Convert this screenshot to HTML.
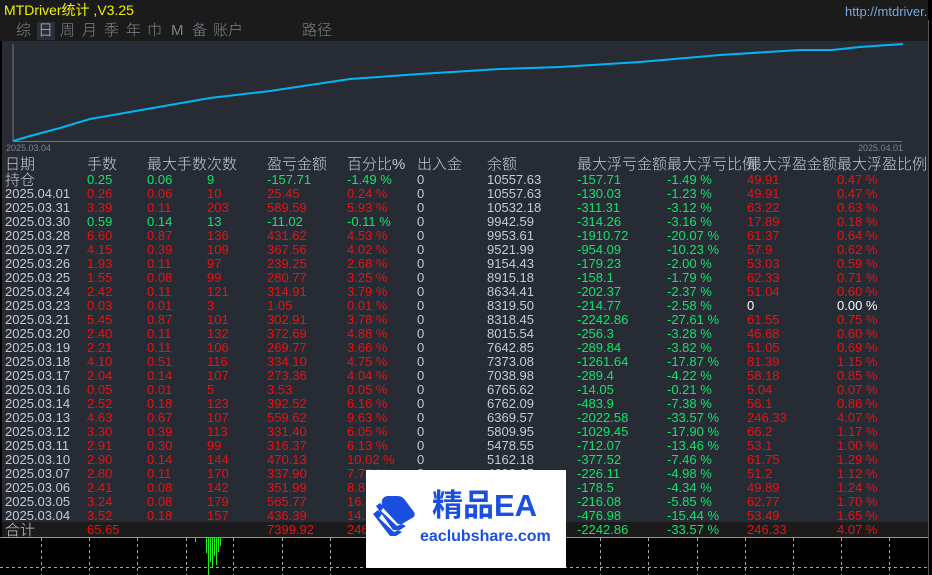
<!DOCTYPE html>
<html><head><meta charset="utf-8"><style>
*{margin:0;padding:0;box-sizing:border-box}
body{width:932px;height:575px;background:#000;position:relative;overflow:hidden;font-family:"Liberation Sans","Noto Sans CJK SC",sans-serif;}
.a{position:absolute;white-space:nowrap}
#top{left:0;top:0;width:928px;height:20px;background:#1b1b1b}
#tabs{left:0;top:20px;width:928px;height:21px;background:#1b1b1b}
#main{left:2px;top:41px;width:926px;height:497px;background:#262b34}
.t{color:#7d8590;font-size:15px;top:21px;line-height:20px;font-weight:300}
.r{position:absolute;left:0;width:928px;height:14px;font-size:13px;line-height:14px;color:#c3cbd8}
.r span{position:absolute;top:0}
.c0{left:5px}.c1{left:87px}.c2{left:147px}.c3{left:207px}.c4{left:267px}.c5{left:347px}.c6{left:417px}.c7{left:487px}.c8{left:577px}.c9{left:667px}.c10{left:747px}.c11{left:837px}
.g{color:#14e36a}.d{color:#f01010}
.h{font-size:15px;line-height:16px;color:#c3cbd8;font-weight:300}
</style></head><body>
<div class="a" id="top"></div>
<div class="a" style="left:4px;top:2px;font-size:14px;color:#f2f200;line-height:16px">MTDriver统计 ,V3.25</div>
<div class="a" style="left:845px;top:4px;font-size:13px;color:#7aa8e0;line-height:15px">http://mtdriver.</div>
<div class="a" id="tabs"></div>
<div class="a" style="left:37px;top:22px;width:18px;height:18px;background:#2a2f38"></div>
<div class="a t" style="left:16px">综</div>
<div class="a t" style="left:38px;color:#b8c0cc">日</div>
<div class="a t" style="left:60px">周</div>
<div class="a t" style="left:82px">月</div>
<div class="a t" style="left:104px">季</div>
<div class="a t" style="left:126px">年</div>
<div class="a t" style="left:147px">巾</div>
<div class="a t" style="left:171px">M</div>
<div class="a t" style="left:192px">备</div>
<div class="a t" style="left:213px">账户</div>
<div class="a t" style="left:302px">路径</div>
<div class="a" id="main"></div>
<div class="a" style="left:928px;top:20px;width:4px;height:555px;background:#000;border-left:1px solid #555"></div>
<svg class="a" style="left:0;top:41px" width="928" height="115">
<line x1="13" y1="3" x2="13" y2="100" stroke="#777" stroke-width="1"/>
<line x1="13" y1="100.5" x2="902" y2="100.5" stroke="#777" stroke-width="1"/>
<polyline fill="none" stroke="#00b6f5" stroke-width="2" points="13,100 30,95 60,87 90,78 130,71 170,64 210,57 270,50 350,38 420,33 500,28 560,26 640,21 720,14 800,9 832,9 860,6 903,3"/>
<text x="6" y="110" font-size="9" fill="#7d8590" font-family="Liberation Sans">2025.03.04</text>
<text x="858" y="110" font-size="9" fill="#7d8590" font-family="Liberation Sans">2025.04.01</text>
</svg>
<div class="r h" style="top:157px"><span class="c0">日期</span><span class="c1">手数</span><span class="c2">最大手数次数</span><span class="c4">盈亏金额</span><span class="c5">百分比%</span><span class="c6">出入金</span><span class="c7">余额</span><span class="c8">最大浮亏金额</span><span class="c9">最大浮亏比例</span><span class="c10">最大浮盈金额</span><span class="c11">最大浮盈比例</span></div>
<div class="r" style="top:173px"><span class="c0 h">持仓</span><span class="c1 g">0.25</span><span class="c2 g">0.06</span><span class="c3 g">9</span><span class="c4 g">-157.71</span><span class="c5 g">-1.49 %</span><span class="c6">0</span><span class="c7">10557.63</span><span class="c8 g">-157.71</span><span class="c9 g">-1.49 %</span><span class="c10 d">49.91</span><span class="c11 d">0.47 %</span></div>
<div class="r" style="top:187px"><span class="c0">2025.04.01</span><span class="c1 d">0.26</span><span class="c2 d">0.06</span><span class="c3 d">10</span><span class="c4 d">25.45</span><span class="c5 d">0.24 %</span><span class="c6">0</span><span class="c7">10557.63</span><span class="c8 g">-130.03</span><span class="c9 g">-1.23 %</span><span class="c10 d">49.91</span><span class="c11 d">0.47 %</span></div>
<div class="r" style="top:201px"><span class="c0">2025.03.31</span><span class="c1 d">3.39</span><span class="c2 d">0.11</span><span class="c3 d">203</span><span class="c4 d">589.59</span><span class="c5 d">5.93 %</span><span class="c6">0</span><span class="c7">10532.18</span><span class="c8 g">-311.31</span><span class="c9 g">-3.12 %</span><span class="c10 d">63.22</span><span class="c11 d">0.63 %</span></div>
<div class="r" style="top:215px"><span class="c0">2025.03.30</span><span class="c1 g">0.59</span><span class="c2 g">0.14</span><span class="c3 g">13</span><span class="c4 g">-11.02</span><span class="c5 g">-0.11 %</span><span class="c6">0</span><span class="c7">9942.59</span><span class="c8 g">-314.26</span><span class="c9 g">-3.16 %</span><span class="c10 d">17.89</span><span class="c11 d">0.18 %</span></div>
<div class="r" style="top:229px"><span class="c0">2025.03.28</span><span class="c1 d">6.60</span><span class="c2 d">0.87</span><span class="c3 d">136</span><span class="c4 d">431.62</span><span class="c5 d">4.53 %</span><span class="c6">0</span><span class="c7">9953.61</span><span class="c8 g">-1910.72</span><span class="c9 g">-20.07 %</span><span class="c10 d">61.37</span><span class="c11 d">0.64 %</span></div>
<div class="r" style="top:243px"><span class="c0">2025.03.27</span><span class="c1 d">4.15</span><span class="c2 d">0.39</span><span class="c3 d">109</span><span class="c4 d">367.56</span><span class="c5 d">4.02 %</span><span class="c6">0</span><span class="c7">9521.99</span><span class="c8 g">-954.09</span><span class="c9 g">-10.23 %</span><span class="c10 d">57.9</span><span class="c11 d">0.62 %</span></div>
<div class="r" style="top:257px"><span class="c0">2025.03.26</span><span class="c1 d">1.93</span><span class="c2 d">0.11</span><span class="c3 d">97</span><span class="c4 d">239.25</span><span class="c5 d">2.68 %</span><span class="c6">0</span><span class="c7">9154.43</span><span class="c8 g">-179.23</span><span class="c9 g">-2.00 %</span><span class="c10 d">53.03</span><span class="c11 d">0.59 %</span></div>
<div class="r" style="top:271px"><span class="c0">2025.03.25</span><span class="c1 d">1.55</span><span class="c2 d">0.08</span><span class="c3 d">99</span><span class="c4 d">280.77</span><span class="c5 d">3.25 %</span><span class="c6">0</span><span class="c7">8915.18</span><span class="c8 g">-158.1</span><span class="c9 g">-1.79 %</span><span class="c10 d">62.33</span><span class="c11 d">0.71 %</span></div>
<div class="r" style="top:285px"><span class="c0">2025.03.24</span><span class="c1 d">2.42</span><span class="c2 d">0.11</span><span class="c3 d">121</span><span class="c4 d">314.91</span><span class="c5 d">3.79 %</span><span class="c6">0</span><span class="c7">8634.41</span><span class="c8 g">-202.37</span><span class="c9 g">-2.37 %</span><span class="c10 d">51.04</span><span class="c11 d">0.60 %</span></div>
<div class="r" style="top:299px"><span class="c0">2025.03.23</span><span class="c1 d">0.03</span><span class="c2 d">0.01</span><span class="c3 d">3</span><span class="c4 d">1.05</span><span class="c5 d">0.01 %</span><span class="c6">0</span><span class="c7">8319.50</span><span class="c8 g">-214.77</span><span class="c9 g">-2.58 %</span><span class="c10" style="color:#fff">0</span><span class="c11" style="color:#fff">0.00 %</span></div>
<div class="r" style="top:313px"><span class="c0">2025.03.21</span><span class="c1 d">5.45</span><span class="c2 d">0.87</span><span class="c3 d">101</span><span class="c4 d">302.91</span><span class="c5 d">3.78 %</span><span class="c6">0</span><span class="c7">8318.45</span><span class="c8 g">-2242.86</span><span class="c9 g">-27.61 %</span><span class="c10 d">61.55</span><span class="c11 d">0.75 %</span></div>
<div class="r" style="top:327px"><span class="c0">2025.03.20</span><span class="c1 d">2.40</span><span class="c2 d">0.11</span><span class="c3 d">132</span><span class="c4 d">372.69</span><span class="c5 d">4.88 %</span><span class="c6">0</span><span class="c7">8015.54</span><span class="c8 g">-256.3</span><span class="c9 g">-3.28 %</span><span class="c10 d">46.68</span><span class="c11 d">0.60 %</span></div>
<div class="r" style="top:341px"><span class="c0">2025.03.19</span><span class="c1 d">2.21</span><span class="c2 d">0.11</span><span class="c3 d">106</span><span class="c4 d">269.77</span><span class="c5 d">3.66 %</span><span class="c6">0</span><span class="c7">7642.85</span><span class="c8 g">-289.84</span><span class="c9 g">-3.82 %</span><span class="c10 d">51.05</span><span class="c11 d">0.69 %</span></div>
<div class="r" style="top:355px"><span class="c0">2025.03.18</span><span class="c1 d">4.10</span><span class="c2 d">0.51</span><span class="c3 d">116</span><span class="c4 d">334.10</span><span class="c5 d">4.75 %</span><span class="c6">0</span><span class="c7">7373.08</span><span class="c8 g">-1261.64</span><span class="c9 g">-17.87 %</span><span class="c10 d">81.39</span><span class="c11 d">1.15 %</span></div>
<div class="r" style="top:369px"><span class="c0">2025.03.17</span><span class="c1 d">2.04</span><span class="c2 d">0.14</span><span class="c3 d">107</span><span class="c4 d">273.36</span><span class="c5 d">4.04 %</span><span class="c6">0</span><span class="c7">7038.98</span><span class="c8 g">-289.4</span><span class="c9 g">-4.22 %</span><span class="c10 d">58.18</span><span class="c11 d">0.85 %</span></div>
<div class="r" style="top:383px"><span class="c0">2025.03.16</span><span class="c1 d">0.05</span><span class="c2 d">0.01</span><span class="c3 d">5</span><span class="c4 d">3.53</span><span class="c5 d">0.05 %</span><span class="c6">0</span><span class="c7">6765.62</span><span class="c8 g">-14.05</span><span class="c9 g">-0.21 %</span><span class="c10 d">5.04</span><span class="c11 d">0.07 %</span></div>
<div class="r" style="top:397px"><span class="c0">2025.03.14</span><span class="c1 d">2.52</span><span class="c2 d">0.18</span><span class="c3 d">123</span><span class="c4 d">392.52</span><span class="c5 d">6.16 %</span><span class="c6">0</span><span class="c7">6762.09</span><span class="c8 g">-483.9</span><span class="c9 g">-7.38 %</span><span class="c10 d">56.1</span><span class="c11 d">0.86 %</span></div>
<div class="r" style="top:411px"><span class="c0">2025.03.13</span><span class="c1 d">4.63</span><span class="c2 d">0.67</span><span class="c3 d">107</span><span class="c4 d">559.62</span><span class="c5 d">9.63 %</span><span class="c6">0</span><span class="c7">6369.57</span><span class="c8 g">-2022.58</span><span class="c9 g">-33.57 %</span><span class="c10 d">246.33</span><span class="c11 d">4.07 %</span></div>
<div class="r" style="top:425px"><span class="c0">2025.03.12</span><span class="c1 d">3.30</span><span class="c2 d">0.39</span><span class="c3 d">113</span><span class="c4 d">331.40</span><span class="c5 d">6.05 %</span><span class="c6">0</span><span class="c7">5809.95</span><span class="c8 g">-1029.45</span><span class="c9 g">-17.90 %</span><span class="c10 d">66.2</span><span class="c11 d">1.17 %</span></div>
<div class="r" style="top:439px"><span class="c0">2025.03.11</span><span class="c1 d">2.91</span><span class="c2 d">0.30</span><span class="c3 d">99</span><span class="c4 d">316.37</span><span class="c5 d">6.13 %</span><span class="c6">0</span><span class="c7">5478.55</span><span class="c8 g">-712.07</span><span class="c9 g">-13.46 %</span><span class="c10 d">53.1</span><span class="c11 d">1.00 %</span></div>
<div class="r" style="top:453px"><span class="c0">2025.03.10</span><span class="c1 d">2.90</span><span class="c2 d">0.14</span><span class="c3 d">144</span><span class="c4 d">470.13</span><span class="c5 d">10.02 %</span><span class="c6">0</span><span class="c7">5162.18</span><span class="c8 g">-377.52</span><span class="c9 g">-7.46 %</span><span class="c10 d">61.75</span><span class="c11 d">1.29 %</span></div>
<div class="r" style="top:467px"><span class="c0">2025.03.07</span><span class="c1 d">2.80</span><span class="c2 d">0.11</span><span class="c3 d">170</span><span class="c4 d">337.90</span><span class="c5 d">7.78 %</span><span class="c6">0</span><span class="c7">4692.05</span><span class="c8 g">-226.11</span><span class="c9 g">-4.98 %</span><span class="c10 d">51.2</span><span class="c11 d">1.12 %</span></div>
<div class="r" style="top:481px"><span class="c0">2025.03.06</span><span class="c1 d">2.41</span><span class="c2 d">0.08</span><span class="c3 d">142</span><span class="c4 d">351.99</span><span class="c5 d">8.86 %</span><span class="c6">0</span><span class="c7">4354.15</span><span class="c8 g">-178.5</span><span class="c9 g">-4.34 %</span><span class="c10 d">49.89</span><span class="c11 d">1.24 %</span></div>
<div class="r" style="top:495px"><span class="c0">2025.03.05</span><span class="c1 d">3.24</span><span class="c2 d">0.08</span><span class="c3 d">179</span><span class="c4 d">565.77</span><span class="c5 d">16.46 %</span><span class="c6">0</span><span class="c7">4002.16</span><span class="c8 g">-216.08</span><span class="c9 g">-5.85 %</span><span class="c10 d">62.77</span><span class="c11 d">1.70 %</span></div>
<div class="r" style="top:509px"><span class="c0">2025.03.04</span><span class="c1 d">3.52</span><span class="c2 d">0.18</span><span class="c3 d">157</span><span class="c4 d">436.39</span><span class="c5 d">14.54 %</span><span class="c6">0</span><span class="c7">3436.39</span><span class="c8 g">-476.98</span><span class="c9 g">-15.44 %</span><span class="c10 d">53.49</span><span class="c11 d">1.65 %</span></div>
<div class="a" style="left:2px;top:522px;width:926px;height:16px;background:#1b1b1b"></div>
<div class="r" style="top:523px;height:15px"><span class="c0 h">合计</span><span class="c1 d">65.65</span><span class="c4 d">7399.92</span><span class="c5 d">246.33 %</span><span class="c8 g">-2242.86</span><span class="c9 g">-33.57 %</span><span class="c10 d">246.33</span><span class="c11 d">4.07 %</span></div>
<div class="a" style="left:0;top:537px;width:928px;height:1px;background:#8a96a8"></div>
<svg class="a" style="left:0;top:538px" width="928" height="37">
<g stroke="#9aa" stroke-width="1" stroke-dasharray="3,3">
<line x1="41.5" y1="0" x2="41.5" y2="37"/><line x1="89.5" y1="0" x2="89.5" y2="37"/><line x1="137.5" y1="0" x2="137.5" y2="37"/><line x1="186.5" y1="0" x2="186.5" y2="37"/><line x1="233.5" y1="0" x2="233.5" y2="37"/><line x1="282.5" y1="0" x2="282.5" y2="37"/><line x1="330.5" y1="0" x2="330.5" y2="37"/><line x1="600.5" y1="0" x2="600.5" y2="37"/><line x1="648.5" y1="0" x2="648.5" y2="37"/><line x1="697.5" y1="0" x2="697.5" y2="37"/><line x1="745.5" y1="0" x2="745.5" y2="37"/><line x1="793.5" y1="0" x2="793.5" y2="37"/><line x1="841.5" y1="0" x2="841.5" y2="37"/><line x1="889.5" y1="0" x2="889.5" y2="37"/>
<line x1="0" y1="29.5" x2="928" y2="29.5"/>
</g>
<g stroke="#22ee22" stroke-width="1">
<line x1="195.5" y1="0" x2="195.5" y2="4"/><line x1="206.5" y1="0" x2="206.5" y2="15"/><line x1="208.5" y1="0" x2="208.5" y2="37"/><line x1="210.5" y1="0" x2="210.5" y2="24"/><line x1="212.5" y1="0" x2="212.5" y2="30"/><line x1="214.5" y1="0" x2="214.5" y2="18"/><line x1="216.5" y1="0" x2="216.5" y2="27"/><line x1="218.5" y1="0" x2="218.5" y2="14"/><line x1="220.5" y1="0" x2="220.5" y2="8"/>
</g>
</svg>
<div class="a" style="left:366px;top:470px;width:200px;height:98px;background:#fff"></div>
<svg class="a" style="left:370px;top:494px" width="50" height="42">
<g fill="#1a4fe0">
<path d="M3 20 L8 16 L12 20 L9 24 L24 38 L28 36 L32 38 L26 42 L20 42 Z"/>
<path d="M6 12 L10 9 L14 13 L11 17 L27 32 L32 30 L36 32 L30 36 L23 36 Z"/>
<path d="M12 6 Q14 2 18 2 L28 2 Q32 2 35 6 L44 18 Q46 22 42 24 L32 30 Q29 31 27 29 L14 15 Q11 11 12 6 Z"/>
</g>
</svg>
<div class="a" style="left:432px;top:488px;font-size:31px;font-weight:bold;color:#1a4fe0;line-height:36px">精品EA</div>
<div class="a" style="left:420px;top:527px;font-size:16px;font-weight:bold;color:#1a4fe0;line-height:20px">eaclubshare.com</div>
</body></html>
